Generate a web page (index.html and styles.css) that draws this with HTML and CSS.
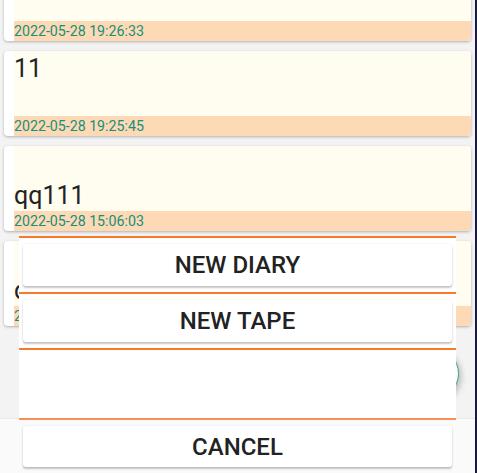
FILE: index.html
```html
<!DOCTYPE html>
<html>
<head>
<meta charset="utf-8">
<link rel="stylesheet" href="styles.css">
</head>
<body>
<div class="app">
  <div class="list-area">
    <div class="list">
      <div class="card">
        <div class="card-body">
          <div class="card-text top"></div>
          <div class="card-date">2022-05-28 19:26:33</div>
        </div>
      </div>
      <div class="card">
        <div class="card-body">
          <div class="card-text top">11</div>
          <div class="card-date">2022-05-28 19:25:45</div>
        </div>
      </div>
      <div class="card">
        <div class="card-body">
          <div class="card-text bottom">qq111</div>
          <div class="card-date">2022-05-28 15:06:03</div>
        </div>
      </div>
      <div class="card">
        <div class="card-body">
          <div class="card-text bottom">qq</div>
          <div class="card-date">2022-05-28 15:05:12</div>
        </div>
      </div>
    </div>
    <div class="fab"></div>
  </div>
  <div class="bottom-bar"></div>

  <div class="sheet">
    <div class="sheet-section">
      <button class="sheet-btn">NEW DIARY</button>
    </div>
    <div class="sheet-section">
      <button class="sheet-btn">NEW TAPE</button>
    </div>
    <div class="sheet-section empty"></div>
    <div class="sheet-cancel">
      <button class="sheet-btn">CANCEL</button>
    </div>
  </div>
</div>
</body>
</html>
```

FILE: styles.css
```css
html, body {
  margin: 0;
  padding: 0;
}
body {
  background: #1a1a3c;
  width: 477px;
  height: 473px;
  overflow: hidden;
  font-family: Roboto, "Noto Sans", sans-serif;
}
.app {
  position: relative;
  width: 475px;
  height: 473px;
  background: #f3f3f3;
  display: flex;
  flex-direction: column;
  overflow: hidden;
}
.list-area {
  position: relative;
  flex: 1;
  overflow: hidden;
}
.list {
  display: flex;
  flex-direction: column;
  gap: 10px;
  padding: 0 4px;
  margin-top: -44px;
}
.card {
  height: 85px;
  background: #ffffff;
  border-radius: 4px;
  box-shadow: 0 1px 3px rgba(0,0,0,0.28);
  overflow: hidden;
  padding-left: 10px;
  display: flex;
}
.card-body {
  flex: 1;
  display: flex;
  flex-direction: column;
  background: #fffdf0;
}
.card-text {
  flex: 1;
  display: flex;
  font-size: 25px;
  color: #222222;
  line-height: 30px;
}
.card-text.top {
  align-items: flex-start;
  padding-top: 3px;
}
.card-text.bottom {
  align-items: flex-end;
  padding-bottom: 0px;
}
.card-date {
  height: 20px;
  background: #fdd9b6;
  color: #15907a;
  font-size: 14.2px;
  line-height: 20px;
}
.fab {
  position: absolute;
  left: 406px;
  top: 347px;
  width: 51px;
  height: 51px;
  border-radius: 50%;
  background: #fffdf0;
  border: 1.5px solid #2aa98a;
  box-shadow: 2px 3px 6px rgba(0,0,0,0.25);
}
.bottom-bar {
  height: 54px;
  background: #fafafa;
  border-top: 1px solid #e9e9e9;
}
.sheet {
  position: absolute;
  left: 19px;
  top: 236px;
  width: 437px;
  display: flex;
  flex-direction: column;
}
.sheet-section {
  background: #ffffff;
  border-top: 2px solid #f57a2c;
  padding: 6px 4px;
  display: flex;
  flex-direction: column;
}
.sheet-section.empty {
  height: 68px;
  padding: 0;
  border-bottom: 2px solid #f68f52;
}
.sheet-cancel {
  padding: 6px 4px 0;
  display: flex;
  flex-direction: column;
}
.sheet-btn {
  height: 42px;
  border: none;
  border-radius: 3px;
  background: #ffffff;
  box-shadow: 0 2px 2px rgba(0,0,0,0.22), 0 0 2px rgba(0,0,0,0.1);
  font-family: Roboto, "Noto Sans", sans-serif;
  font-weight: 500;
  font-size: 24px;
  color: #222222;
  padding: 0;
}
.sheet-cancel .sheet-btn {
  height: 41px;
}
```
